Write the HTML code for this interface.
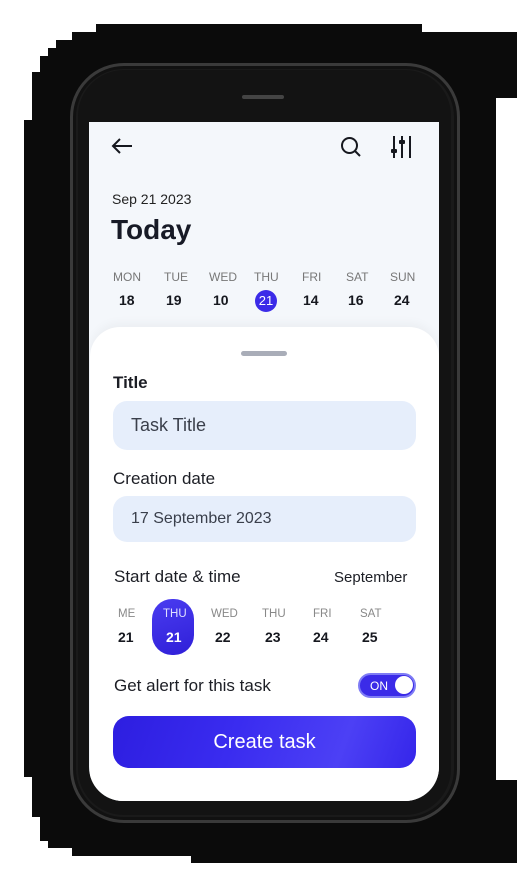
<!DOCTYPE html>
<html><head><style>
*{margin:0;padding:0;box-sizing:border-box}
body{width:525px;height:879px;background:#fff;position:relative;overflow:hidden;font-family:"Liberation Sans",sans-serif;color:#16181f}
.b{position:absolute;background:#0b0b0b}
.a{position:absolute;white-space:nowrap}
</style></head><body>
<div class="b" style="left:96px;top:24px;width:326px;height:20px"></div>
<div class="b" style="left:72px;top:32px;width:445px;height:66px"></div>
<div class="b" style="left:56px;top:40px;width:440px;height:800px"></div>
<div class="b" style="left:48px;top:48px;width:445px;height:800px"></div>
<div class="b" style="left:40px;top:56px;width:453px;height:785px"></div>
<div class="b" style="left:32px;top:72px;width:461px;height:745px"></div>
<div class="b" style="left:24px;top:120px;width:469px;height:657px"></div>
<div class="b" style="left:72px;top:780px;width:445px;height:76px"></div>
<div class="b" style="left:420px;top:790px;width:97px;height:66px"></div>
<div class="b" style="left:191px;top:800px;width:326px;height:63px"></div>
<!-- phone -->
<div style="position:absolute;left:70px;top:63px;width:390px;height:760px;border-radius:54px;background:#1a1a1a;border:3px solid #3a3a3a;box-shadow:inset 0 0 0 3px #111"></div>
<div style="position:absolute;left:78px;top:70px;width:373px;height:745px;border-radius:46px;background:#131313"></div>
<div style="position:absolute;left:242px;top:95px;width:42px;height:4px;border-radius:2px;background:#444"></div>
<div style="position:absolute;left:89px;top:122px;width:350px;height:679px;background:#f4f7fb;border-radius:0 0 34px 34px;overflow:hidden">
 <svg style="position:absolute;left:22px;top:16px" width="22" height="16" viewBox="0 0 22 16"><path d="M21 8H2M9 1L2 8l7 7" fill="none" stroke="#16181f" stroke-width="2"/></svg>
 <svg style="position:absolute;left:251px;top:14px" width="22" height="22" viewBox="0 0 22 22"><circle cx="9.5" cy="9.5" r="7.5" fill="none" stroke="#16181f" stroke-width="2"/><path d="M15 15l5 5" stroke="#16181f" stroke-width="2"/></svg>
 <svg style="position:absolute;left:302px;top:13px" width="22" height="24" viewBox="0 0 22 24"><g stroke="#16181f" stroke-width="2"><path d="M3 1v22M11 1v22M19 1v22"/></g><g fill="#16181f"><rect x="0" y="14" width="6" height="4" rx="1"/><rect x="8" y="5" width="6" height="4" rx="1"/></g></svg>
 <div class="a" style="left:23px;top:69px;font-size:14px;color:#222">Sep 21 2023</div>
 <div class="a" style="left:22px;top:92px;font-size:28px;font-weight:bold;color:#171a26">Today</div>
 <div class="a" style="left:0;top:148px;width:350px;font-size:12px;color:#777">
  <span class="a" style="left:24px">MON</span><span class="a" style="left:75px">TUE</span><span class="a" style="left:120px">WED</span><span class="a" style="left:165px">THU</span><span class="a" style="left:213px">FRI</span><span class="a" style="left:257px">SAT</span><span class="a" style="left:301px">SUN</span></div>
 <div class="a" style="left:0;top:170px;width:350px;font-size:14px;font-weight:bold">
  <span class="a" style="left:30px">18</span><span class="a" style="left:77px">19</span><span class="a" style="left:124px">10</span><span class="a" style="left:166px;top:-2px;width:22px;height:22px;border-radius:11px;background:#3b2be8;color:#fff;font-weight:normal;font-size:13px;text-align:center;line-height:22px">21</span><span class="a" style="left:214px">14</span><span class="a" style="left:259px">16</span><span class="a" style="left:305px">24</span></div>
 <div style="position:absolute;left:1px;top:205px;width:349px;height:480px;background:#fff;border-radius:30px 30px 0 0;box-shadow:0 -4px 10px rgba(0,0,0,.04)"></div>
 <div style="position:absolute;left:152px;top:229px;width:46px;height:5px;border-radius:3px;background:#a9adb8"></div>
 <div class="a" style="left:24px;top:251px;font-size:17px;font-weight:bold;color:#1c1e25">Title</div>
 <div style="position:absolute;left:24px;top:279px;width:303px;height:49px;border-radius:14px;background:#e6eefb"></div>
 <div class="a" style="left:42px;top:293px;font-size:18px;color:#3a3f4b">Task Title</div>
 <div class="a" style="left:24px;top:347px;font-size:17px;color:#1c1e25">Creation date</div>
 <div style="position:absolute;left:24px;top:374px;width:303px;height:46px;border-radius:14px;background:#e6eefb"></div>
 <div class="a" style="left:42px;top:388px;font-size:16px;color:#3a3f4b">17 September 2023</div>
 <div class="a" style="left:25px;top:445px;font-size:17px;color:#1c1e25">Start date &amp; time</div>
 <div class="a" style="left:245px;top:447px;font-size:15px;color:#1c1e25">September</div>
 <div style="position:absolute;left:63px;top:477px;width:42px;height:56px;border-radius:20px;background:linear-gradient(160deg,#4a3cf0,#2f1fd8)"></div>
 <div class="a" style="left:0;top:486px;width:350px;font-size:11.5px;color:#888">
  <span class="a" style="left:29px">ME</span><span class="a" style="left:74px;color:#dfe0ff">THU</span><span class="a" style="left:122px">WED</span><span class="a" style="left:173px">THU</span><span class="a" style="left:224px">FRI</span><span class="a" style="left:271px">SAT</span></div>
 <div class="a" style="left:0;top:507px;width:350px;font-size:14px;font-weight:bold">
  <span class="a" style="left:29px">21</span><span class="a" style="left:77px;color:#fff">21</span><span class="a" style="left:126px">22</span><span class="a" style="left:176px">23</span><span class="a" style="left:224px">24</span><span class="a" style="left:273px">25</span></div>
 <div class="a" style="left:25px;top:554px;font-size:17px;color:#1c1e25">Get alert for this task</div>
 <div style="position:absolute;left:269px;top:551px;width:58px;height:25px;border-radius:13px;background:#3b2be8;border:2px solid #7f7cf5"></div>
 <div class="a" style="left:281px;top:557px;font-size:12px;color:#fff">ON</div>
 <div style="position:absolute;left:306px;top:554px;width:18px;height:18px;border-radius:9px;background:#fff"></div>
 <div style="position:absolute;left:24px;top:594px;width:303px;height:52px;border-radius:16px;background:linear-gradient(110deg,#2d1ee0 0%,#3a2cf0 40%,#4c40f5 75%,#3526ea 100%);color:#fff;font-size:20px;text-align:center;line-height:52px">Create task</div>
</div>
</body></html>
